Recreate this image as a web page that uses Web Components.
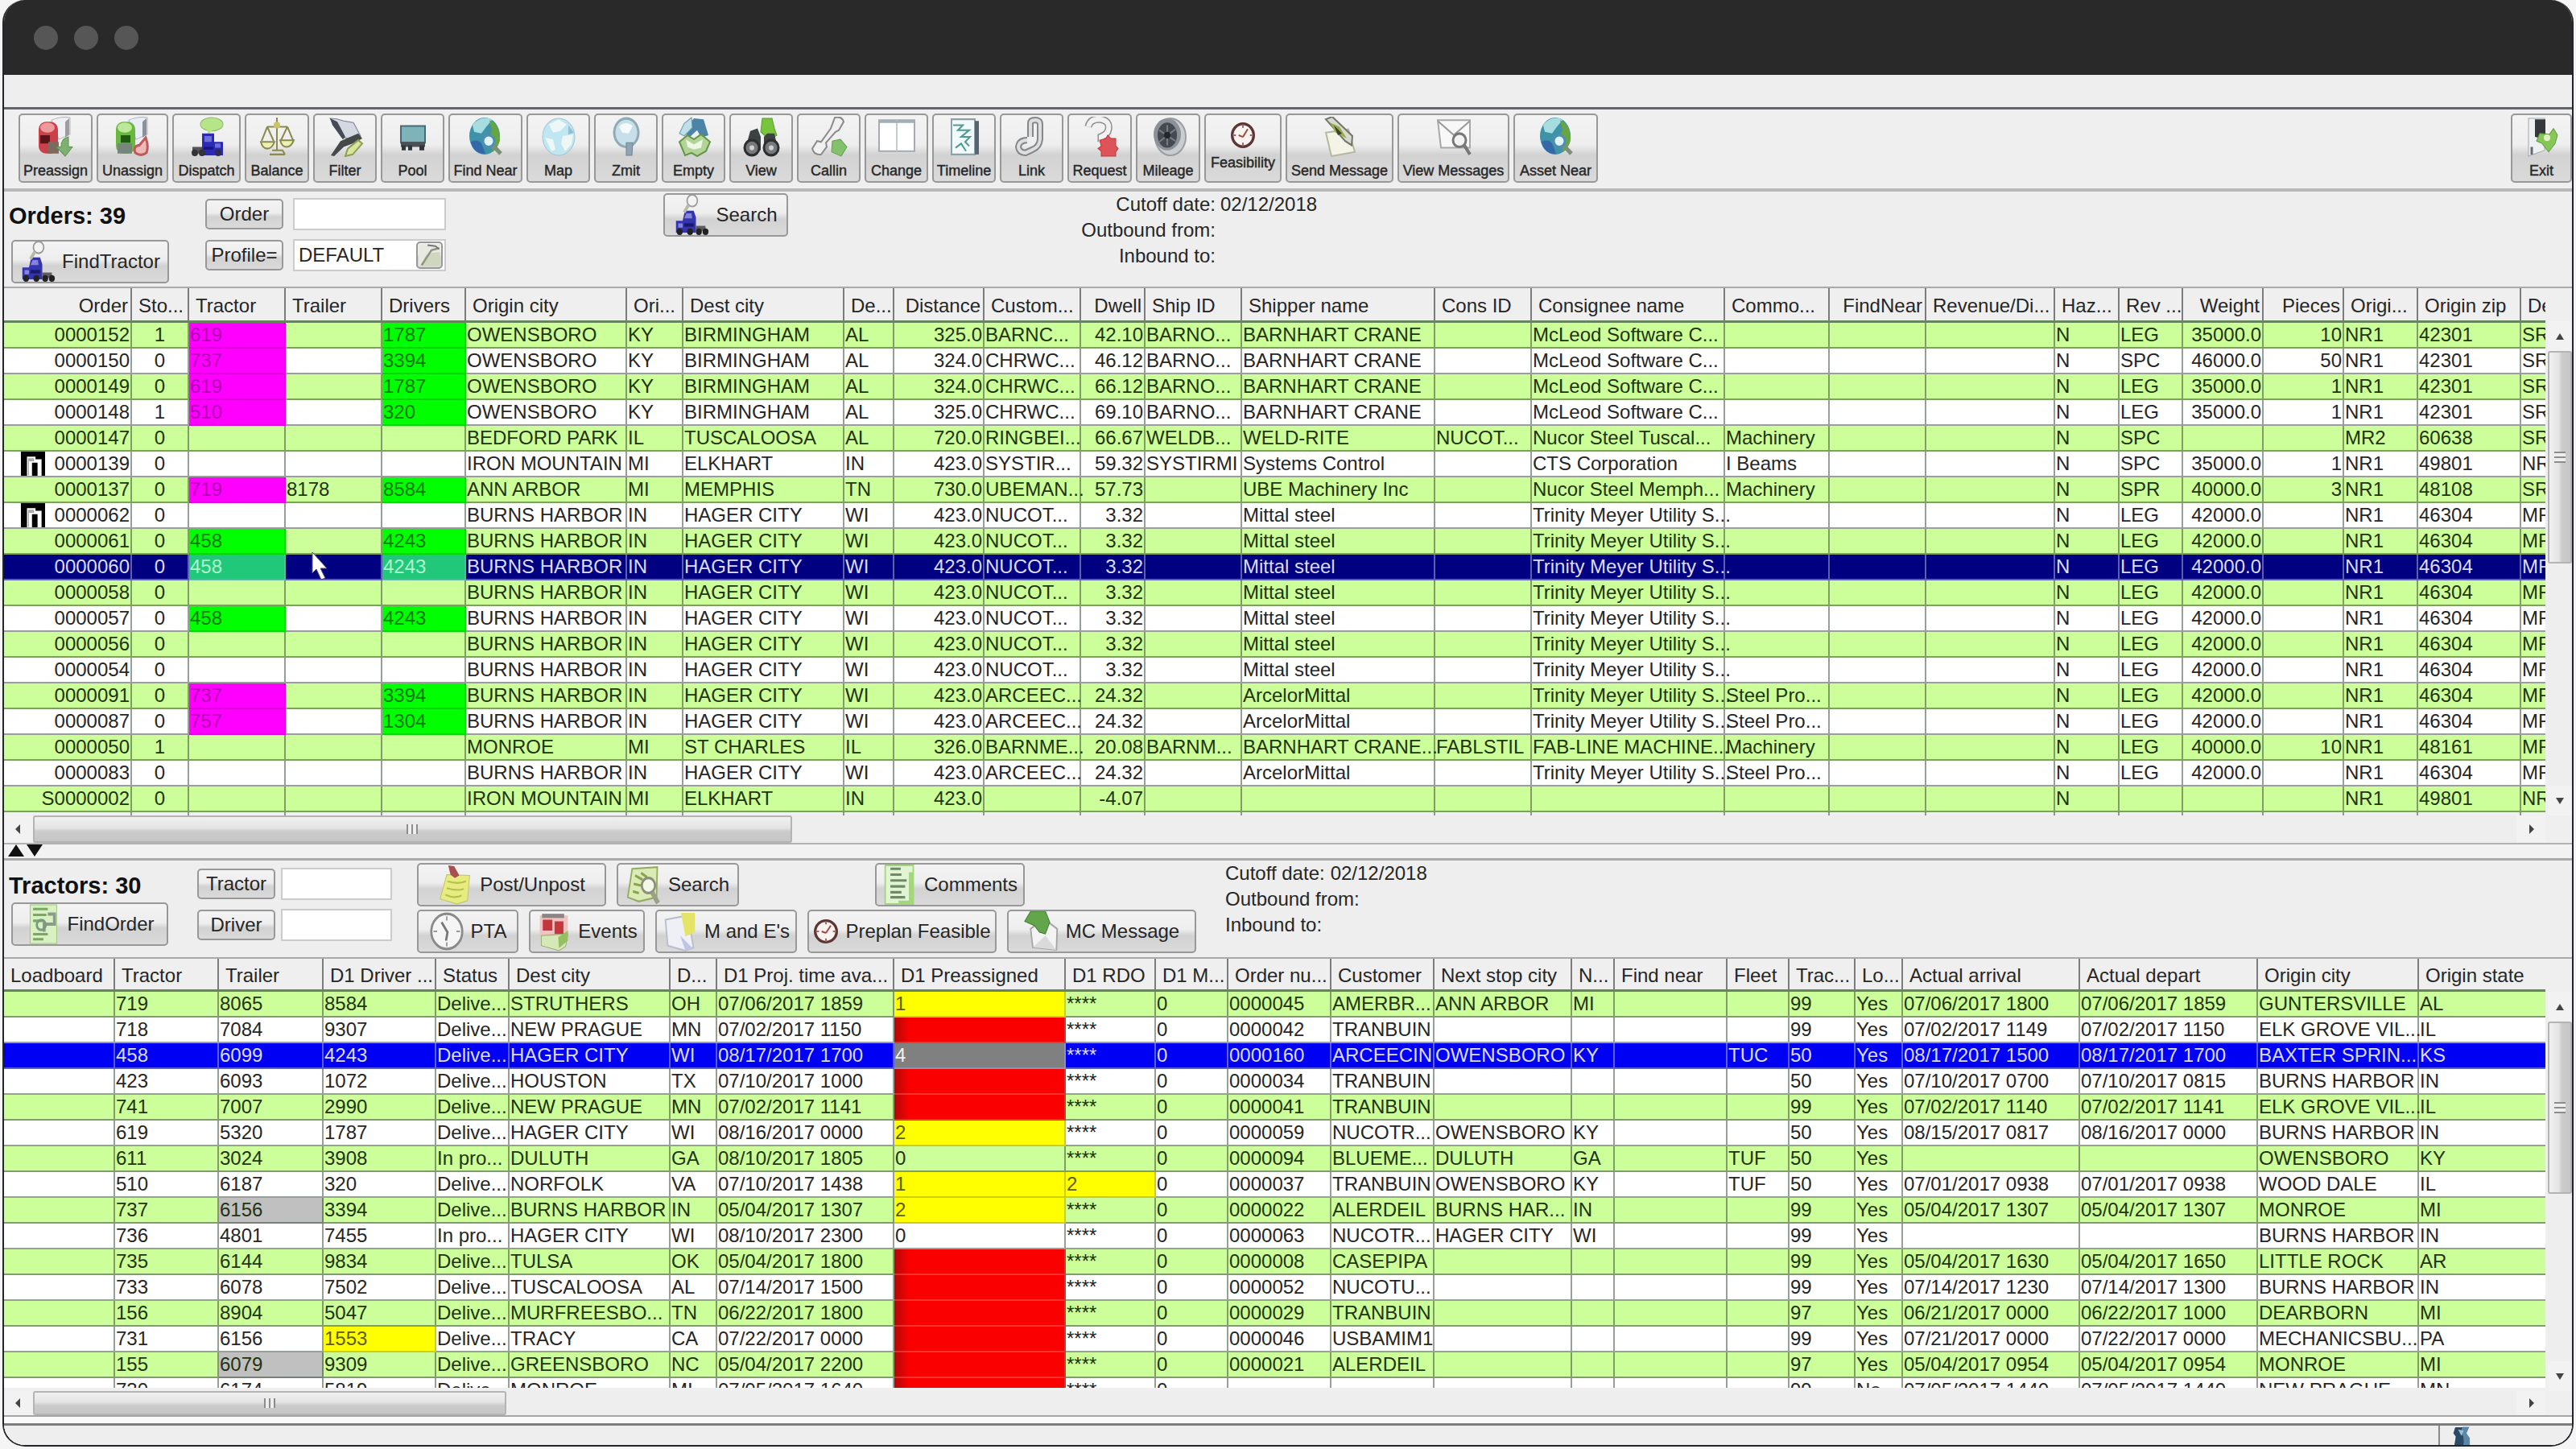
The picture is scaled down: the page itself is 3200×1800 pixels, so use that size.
<!DOCTYPE html>
<html lang="en">
<head>
<meta charset="utf-8">
<title>Dispatch planning</title>
<style>
    body {
        margin: 0;
        background: #f4f5f4;
        font-family: "Liberation Sans", Arial, sans-serif;
        font-size: 24px;
        color: #262626;
    }
</style>
</head>
<body>
<planning-window></planning-window>

<script>
/* ICONS: all drawn on a 48 x 48 box */
const truck = `
    <path d="M18 20h15v10h11v16H18z" fill="#2a2ab4"/>
    <path d="M21 23h9v7h-9zM34 32h7v5h-7z" fill="#6f6fd8"/>
    <path d="M20 36h12v3H20z" fill="#14147a"/>
    <path d="M6 36h12v8H6z" fill="#55555c"/>
    <circle cx="9" cy="43" r="4" fill="#333"/><circle cx="18" cy="43" r="4" fill="#333"/><circle cx="38" cy="43" r="4" fill="#2c2c50"/>`;
const truckLeft = `
    <path d="M15 19h12l3 8v18H3V31h9z" fill="#3434ac"/>
    <path d="M17 22h7l1 6H14zM6 34h6v5H6z" fill="#8484dc"/>
    <path d="M14 34h13v4H14z" fill="#18186e"/>
    <path d="M30 37h13v6H30z" fill="#5c5c62"/>
    <circle cx="8" cy="44" r="4" fill="#222"/><circle cx="22" cy="44" r="4" fill="#222"/><circle cx="34" cy="44" r="4" fill="#222"/><circle cx="43" cy="44" r="4" fill="#222"/>
    <ellipse cx="25" cy="7" rx="7" ry="7" fill="#f4f4f4" stroke="#9c9c9c" stroke-width="2"/>
    <path d="M20 12l-6 9" stroke="#b9b9a6" stroke-width="4"/>`;
const globe = `
    <ellipse cx="23" cy="23" rx="19" ry="22" fill="#3f93a8"/>
    <path d="M8 10c6-8 18-11 24-6l-7 8-6 8-9-2z" fill="#a7dde0"/>
    <path d="M29 4c9 3 14 13 13 24-2 8-7 13-9 14l-5-16 4-10z" fill="#67a544"/>
    <path d="M6 30c5-3 12-2 14 4l4 10C14 45 8 39 6 30z" fill="#3568a8"/>
    <circle cx="28" cy="29" r="7" fill="#e0f5fa" stroke="#4d8fb4" stroke-width="3"/>
    <path d="M34 35l9 9" stroke="#7b8f79" stroke-width="5"/>`;
const clock = `
    <circle cx="24" cy="24" r="20" fill="#fbf3f0" stroke="#5c3535" stroke-width="5"/>
    <path d="M24 5v6M24 37v6M5 24h6M37 24h6" stroke="#9c6a62" stroke-width="3"/>
    <path d="M24 27l9-14M24 27l-8-3" stroke="#a04a42" stroke-width="3"/>`;

const ICONS = {
    preassign: `
        <path d="M19 4q12-5 23-3v20l-14 6z" fill="#f0f0f4" stroke="#b5b5bb"/><path d="M41 2v19l-5 4V6z" fill="#9c9ca2"/>
        <rect x="3" y="6" width="24" height="38" rx="9" fill="#c9424a"/>
        <ellipse cx="14" cy="13" rx="9" ry="6" fill="#ee9a9c"/>
        <path d="M5 22h12v10H5z" fill="#5c141a"/><path d="M15 30h13v14H15z" fill="#7c6a5d"/>
        <path d="M40 24v12h5l-9 11-11-11h6q-1-9 9-12z" fill="#7fb072" stroke="#5f9455"/>`,
    unassign: `
        <path d="M19 4q12-5 23-3v20l-14 6z" fill="#e9edf6" stroke="#b0b5c2"/><path d="M41 2v19l-5 4V6z" fill="#8c9098"/>
        <rect x="3" y="6" width="24" height="38" rx="9" fill="#6ab83e"/>
        <ellipse cx="14" cy="13" rx="9" ry="6" fill="#bce89b"/>
        <path d="M9 22h12v9H9z" fill="#1e5a12"/><path d="M5 32h18v12H5z" fill="#76867a"/>
        <path d="M40 25q4 10 1 18-7 5-14 0-3-8 5-9z" fill="#f0b9b8" stroke="#bc5a5c" stroke-width="3"/>`,
    dispatch: `
        <ellipse cx="30" cy="9" rx="14" ry="8" fill="#b5e588" stroke="#8cb76c"/>
        <path d="M24 15l2 6 5-5z" fill="#b5e588"/>` + truck,
    balance: `
        <g fill="none" stroke="#8a8a4c" stroke-width="2">
        <path d="M24 1v38M12 12h25M12 12l-7 17M12 12l8 17M37 12l-8 16M37 12l7 16M15 45h19M18 40h13l3 5"/>
        <path d="M4 30h17q-3 8-9 8t-8-8zM28 28h17q-3 8-9 8t-8-8z" fill="#edf0b4"/></g>
        <circle cx="24" cy="10" r="4" fill="#c9c36c"/>`,
    filter: `
        <path d="M5 2q8 0 17 3l12 2 9 16-7 5L19 24 9 8z" fill="#d3d8e2" stroke="#7a808e"/>
        <path d="M5 2l9 4 10 18-3 3L8 10z" fill="#444a56"/>
        <path d="M40 20l5 6-9 5-14 5-12 11-4-1 12-17z" fill="#46484a"/>
        <path d="M40 28l5 4-12 13-9 2 3-9z" fill="#d8e59a" stroke="#8ca055" stroke-width="2"/>`,
    pool: `
        <path d="M9 11h30v20H9z" fill="#7fb3ba" stroke="#496a72" stroke-width="2"/>
        <path d="M9 30h30v6H9z" fill="#4a5055"/>
        <path d="M10 34h5v6h-5zM18 34h5v6h-5zM32 34h6v6h-6z" fill="#30363a"/>`,
    globe: globe,
    map: `
        <ellipse cx="24" cy="24" rx="20" ry="22" fill="#c0e6f1" stroke="#a9c6d2"/>
        <path d="M12 9l12-6 10 6-8 8-9 2zM7 25l10 2 3 12-5 2zM29 23l13-2-2 12-8 8-5-9z" fill="#edf7f6"/>
        <path d="M36 10l7 9-7 2z" fill="#93bfd3"/>`,
    zmit: `
        <ellipse cx="24" cy="19" rx="15" ry="17" fill="#c7dfe9" stroke="#90aab6" stroke-width="3"/>
        <path d="M15 12q8-8 17-1l-5 9-8-1z" fill="#f4fafb"/>
        <path d="M24 31h8l-1 15h-7z" fill="#8fa4b4" stroke="#6f8494"/>`,
    empty: `
        <path d="M24 2l12 1 6 19-9 3-5-9-9 8-9-5z" fill="#4b84a6"/>
        <path d="M12 8l9-7 1 12-10 10-6-3z" fill="#bfe0ea" stroke="#6b98aa"/>
        <path d="M6 30l10-8 8 5 9-6 11 9-5 11-11 6-7-4-8 3z" fill="#b2d596" stroke="#67934d" stroke-width="2"/>
        <path d="M14 27l10 6 11-6-2 10-9 2-8-3z" fill="#eef6e8"/>`,
    view: `
        <path d="M25 2h12l3 12 3 8-10 5-10-9z" fill="#78c53c" stroke="#5a9a2f"/>
        <path d="M10 17l9-3 4 10v16l-19-2zM27 24l4-4h9l4 18-17 2z" fill="#3c4142"/>
        <circle cx="12" cy="37" r="9" fill="#77797b" stroke="#2c2e2f" stroke-width="3"/><circle cx="36" cy="37" r="9" fill="#77797b" stroke="#2c2e2f" stroke-width="3"/>
        <circle cx="12" cy="37" r="3" fill="#cfd0d0"/><circle cx="36" cy="37" r="3" fill="#cfd0d0"/>`,
    callin: `
        <path d="M31 1q9-2 11 5l-6 10-4 2-12 13 1 5-7 9q-9 1-11-7l6-9 5 1 12-16z" fill="#f0f0f0" stroke="#8b8b8b" stroke-width="2"/>
        <path d="M28 29l10-2 8 9-7 11-12-5z" fill="#83c26a" stroke="#62a04e"/>`,
    change: `
        <path d="M2 4h44v37H2z" fill="#fff" stroke="#a7abaf" stroke-width="2"/>
        <path d="M24 4v37" stroke="#c3ccd2" stroke-width="2"/><path d="M3 6h42" stroke="#9fb0bb" stroke-width="3"/>`,
    timeline: `
        <path d="M8 3h29v42H8z" fill="#f2f9fa" stroke="#8ca1a6" stroke-width="2"/><path d="M37 5v40h5V5z" fill="#58646e"/>
        <path d="M10 10h12l-6 6h14l-10 8h11l-6 6 5 5M13 37l7-5 6 9" fill="none" stroke="#4e9a96" stroke-width="2"/>`,
    link: `
        <g fill="none" stroke="#85888b" stroke-width="8"><path d="M22 24V8q0-4 6-4t6 5v18q-1 9-9 12l-9 4q-8 0-9-7 1-8 11-8"/></g>
        <g fill="none" stroke="#dedede" stroke-width="4"><path d="M22 24V8q0-4 6-4t6 5v18q-1 9-9 12l-9 4q-8 0-9-7 1-8 11-8"/></g>`,
    request: `
        <path d="M10 12q2-10 15-9 12 2 10 12-1 6-9 9v6" fill="none" stroke="#8e8e8e" stroke-width="9"/>
        <path d="M10 12q2-10 15-9 12 2 10 12-1 6-9 9v6" fill="none" stroke="#f1f1f1" stroke-width="6"/>
        <path d="M24 28l8-2 2-4 4 4h6v9l3 3-3 4v5H26v-6l-4-3 4-3z" fill="#dd5358" stroke="#c03a42"/>`,
    mileage: `
        <ellipse cx="27" cy="24" rx="19" ry="22" fill="#c9cdd2" stroke="#9b9fa4" stroke-width="2"/>
        <ellipse cx="23" cy="21" rx="17" ry="19" fill="#8c9198"/>
        <ellipse cx="23" cy="22" rx="12" ry="15" fill="#454a51"/>
        <path d="M23 10v24M13 16l20 13M33 15L13 30" stroke="#777c84" stroke-width="2"/>
        <circle cx="23" cy="22" r="4" fill="#23262b"/>`,
    clock: clock,
    send: `
        <path d="M7 19l28-4 8 27-29 5z" fill="#f3f4e6" stroke="#b5b8a2" stroke-width="2"/>
        <path d="M7 3l8-3 25 23-1 11-8-5z" fill="#d8dad0" stroke="#73766b" stroke-width="2"/>
        <path d="M12 7l12 5 9 14-14-7z" fill="#95ad4c"/><path d="M17 10l5 12 5-2z" fill="#3d3f35"/>`,
    envelope: `
        <path d="M4 4h40v33H8z" fill="#f8f8f8" stroke="#a8a8a8" stroke-width="2"/>
        <path d="M4 5l20 17L44 5" fill="none" stroke="#9a9a9a" stroke-width="2"/>
        <circle cx="31" cy="28" r="8" fill="#f1f3f3" stroke="#777" stroke-width="3"/><path d="M37 34l7 11" stroke="#777" stroke-width="4"/>`,
    exit: `
        <path d="M8 2h20v38l-20 7z" fill="#eef0f2" stroke="#a3a7aa"/><path d="M16 3h13v24l-13-3z" fill="#35383c"/>
        <path d="M22 20l12 1 5-7 5 8-3 10-8 10-8-10-7-3z" fill="#86c757" stroke="#629c3e"/><circle cx="31" cy="25" r="4" fill="#dff2c0"/>
        <path d="M12 36v9" stroke="#666a70" stroke-width="3"/>`,
    truckLeft: truckLeft,
    sheet: `
        <path d="M7 1h36v46H7z" fill="#d9f0c2" stroke="#9cc57c"/>
        <path d="M11 6h20M11 13h18M11 20h15M11 36h20M11 42h14" stroke="#7aa864" stroke-width="3"/>
        <path d="M31 12h9v12H26v9" fill="none" stroke="#8a9a8b" stroke-width="4"/><circle cx="22" cy="25" r="6" fill="none" stroke="#7a9884" stroke-width="3"/>`,
    comments: `
        <path d="M4 1h38v46H4z" fill="#e2f5d2" stroke="#a4d47d" stroke-width="2"/><path d="M36 9h6v38H22v-4h14z" fill="#a2d77b"/>
        <path d="M11 5h14M11 12h15M11 19h22M11 26h20M11 33h15M11 39h20" stroke="#6f8a68" stroke-width="3"/>`,
    post: `
        <path d="M12 12l31 1-3 30-14 4-23-6z" fill="#e6ec7f" stroke="#bfc265"/>
        <path d="M13 20q14 4 25 0M12 28q14 4 23 1M10 36q12 5 22 1" fill="none" stroke="#b6bf52" stroke-width="2"/>
        <path d="M14 1l8 1 7 11-6 3-6-4z" fill="#a65150"/>`,
    mapSearch: `
        <path d="M8 5l34-2-1 36-24 5-15-5z" fill="#dcebb6" stroke="#93ac63" stroke-width="2"/>
        <path d="M12 13l10 5M20 10l8 5M10 23l10 2M9 32l8 2" stroke="#86a64e" stroke-width="3"/>
        <circle cx="30" cy="25" r="9" fill="#f3f7e8" stroke="#8c8f7c" stroke-width="3"/><path d="M35 33l8 13" stroke="#9ca086" stroke-width="6"/>`,
    dial: `
        <circle cx="24" cy="24" r="21" fill="#f5f5f5" stroke="#8a8a8a" stroke-width="3"/>
        <path d="M24 6v5M24 37v5M6 24h5M37 24h5" stroke="#999" stroke-width="2"/><path d="M17 13l8 12-2 10" fill="none" stroke="#777" stroke-width="3"/>`,
    events: `
        <path d="M5 5h38v25H5z" fill="#efc3c0"/><path d="M8 3h30v5H8z" fill="#8d8585"/>
        <path d="M9 10h13v13H9zM25 12h12v15H25z" fill="#c4373e"/>
        <path d="M7 29l36-2-3 15-9 5-24-6z" fill="#d6e8b7" stroke="#99a86f"/><path d="M30 31l13-8v12l-12 9z" fill="#94c061"/>`,
    note: `
        <path d="M4 10l30-5 8 38-11 4-24-6z" fill="#eef0f6" stroke="#b9bccb" stroke-width="2"/>
        <path d="M25 2h19v23l-13 5z" fill="#e5e468"/><path d="M24 29l18 16-11 2z" fill="#bdc5e3"/>`,
    mail: `
        <path d="M9 21l18-12 18 12-1 25-32-3z" fill="#f3f3f3" stroke="#a5a5a5" stroke-width="2"/>
        <path d="M12 43l17-14 15 17z" fill="#dadada"/>
        <path d="M9 0h20l6 13-6 14-8-2-7-8-13-5z" fill="#62a54a" stroke="#3f7b31"/>`,
    lookup: `
        <path d="M2 2h44v44H2z" fill="#e9e9e4"/><path d="M18 22q10-4 28-4v28H4z" fill="#cfd8bf"/>
        <path d="M44 10L28 14 8 44" fill="none" stroke="#8f9483" stroke-width="4"/><path d="M20 4l16 2 8 6" fill="none" stroke="#777" stroke-width="3"/>`,
    doc: `
        <path d="M0 0h48v48H0z" fill="#000"/><path d="M12 10h17v5h12v33h-8V22H22v26H12z" fill="#fff"/><path d="M14 13h12v6H16v28h-2z" fill="#aaa"/>`,
    user: `
        <path d="M12 4h16l-4 12 8 10-2 22H10l3-22-5-8z" fill="#2b4a66"/><path d="M28 3h14l-6 15 7 12v18H31l-2-22-5-8z" fill="#5c88a8"/><path d="M18 9l12 3-5 12z" fill="#9cc0d5"/>`
};

const svg = name => `<svg viewBox="0 0 48 48" preserveAspectRatio="none" aria-hidden="true">${ICONS[name]}</svg>`;

const buttonLook = `
    button {
        box-sizing: border-box;
        width: 100%;
        height: 100%;
        margin: 0;
        padding: 0;
        border: 2px solid #989898;
        border-radius: 5px;
        background: linear-gradient(#f3f3f3, #eeeeee 45%, #d2d2d2 60%, #dadada);
        font: inherit;
        color: inherit;
        white-space: nowrap;
    }`;

/* TOOLBAR BUTTON: picture above a small label */
class ToolButton extends HTMLElement {
    constructor() {
        super();
        this.shadowDOM = this.attachShadow({mode: "open"});
    }

    connectedCallback() {
        this.shadowDOM.innerHTML = `
        <style>
        :host { display: block; height: 86px; font-size: 18px; }
        ${buttonLook}
        button {
            display: flex;
            flex-direction: column;
            align-items: center;
            justify-content: flex-start;
            gap: 5px;
            line-height: 24px;
            -webkit-text-stroke: 0.4px;
        }
        svg { width: 48px; height: 50px; margin-top: 2px; }
        :host([small]) svg { width: 32px; height: 34px; margin-top: 8px; }
        </style>
        <button type="button">${svg(this.getAttribute("icon"))}<span><slot></slot></span></button>`;
    }
}
customElements.define("tool-button", ToolButton);

/* PANEL BUTTON: optional picture left of the label */
class PanelButton extends HTMLElement {
    constructor() {
        super();
        this.shadowDOM = this.attachShadow({mode: "open"});
    }

    connectedCallback() {
        const icon = this.getAttribute("icon");
        this.shadowDOM.innerHTML = `
        <style>
        :host { display: block; height: 54px; }
        ${buttonLook}
        button { display: flex; align-items: center; justify-content: center; gap: 8px; }
        svg { width: 44px; height: 50px; }
        :host([icon="clock"]) svg { width: 32px; height: 32px; }
        :host([plain]) { height: 38px; }
        </style>
        <button type="button">${icon ? svg(icon) : ""}<span><slot></slot></span></button>`;
    }
}
customElements.define("panel-button", PanelButton);

/* TEXT FIELD, with a lookup button when asked for */
class TextField extends HTMLElement {
    constructor() {
        super();
        this.shadowDOM = this.attachShadow({mode: "open"});
    }

    connectedCallback() {
        this.shadowDOM.innerHTML = `
        <style>
        :host { box-sizing: border-box; display: flex; align-items: center; height: 40px; border: 2px solid #cbcbcb; background: #fff; }
        input { flex: 1; min-width: 0; padding: 0 0 0 5px; border: 0; background: none; font: inherit; color: inherit; outline: 0; }
        ${buttonLook}
        button { width: 33px; height: 34px; margin-right: 2px; }
        svg { display: block; width: 100%; height: 100%; }
        </style>
        <input type="text" aria-label="${this.getAttribute("label")}" value="${this.getAttribute("value") || ""}">
        ${this.hasAttribute("lookup") ? `<button type="button" aria-label="Lookup">${svg("lookup")}</button>` : ""}`;
    }
}
customElements.define("text-field", TextField);

/* SCROLL BAR: thumb and rest share the track by their weights */
class ScrollTrack extends HTMLElement {
    constructor() {
        super();
        this.shadowDOM = this.attachShadow({mode: "open"});
    }

    connectedCallback() {
        const vertical = this.hasAttribute("vertical");
        const arrow = d => `<svg viewBox="0 0 16 16"><path d="${d}" fill="#444"/></svg>`;
        this.shadowDOM.innerHTML = `
        <style>
        :host { display: flex; flex-direction: ${vertical ? "column" : "row"}; background: #eeeeee; }
        button { flex: none; display: flex; align-items: center; justify-content: center; width: 36px; padding: 0; border: 0; background: #f2f2f2; }
        button svg { width: 16px; height: 16px; }
        .thumb {
            box-sizing: border-box;
            flex: ${this.getAttribute("thumb")} 0 0;
            display: flex;
            align-items: center;
            justify-content: center;
            border: 2px solid #b4b4b4;
            border-radius: 3px;
            background: linear-gradient(${vertical ? "to right" : "to bottom"}, #f0f0f0, #e4e4e4 45%, #cbcbcb 60%, #c6c6c6);
        }
        .grip { width: 14px; height: 12px; background: repeating-linear-gradient(to right, #8c8c8c 0 2px, #eee 2px 6px); }
        .rest { flex: ${this.getAttribute("rest")} 0 0; }
        :host([vertical]) button { width: 100%; height: 37px; }
        :host([vertical]) .grip { width: 14px; height: 14px; background: repeating-linear-gradient(#8c8c8c 0 2px, #eee 2px 6px); }
        </style>
        <button type="button" aria-label="Scroll back">${arrow(vertical ? "M8 4l5 8H3z" : "M4 8l6-6v12z")}</button>
        <div class="thumb"><div class="grip"></div></div>
        <div class="rest"></div>
        <button type="button" aria-label="Scroll on">${arrow(vertical ? "M8 12L3 4h10z" : "M12 8L6 2v12z")}</button>`;
    }
}
customElements.define("scroll-track", ScrollTrack);

/* DATA
   columns: title, width, alignment
   cells: an optional "class~" in front of the text */
const ORDER_COLUMNS = [
    ["Order", 159, "r"], ["Sto...", 71, "c"], ["Tractor", 120], ["Trailer", 120], ["Drivers", 104],
    ["Origin city", 200], ["Ori...", 70], ["Dest city", 200], ["De...", 62], ["Distance", 112, "r"],
    ["Custom...", 120], ["Dwell", 80, "r"], ["Ship ID", 120], ["Shipper name", 240], ["Cons ID", 120],
    ["Consignee name", 240], ["Commo...", 130], ["FindNear", 120, "r"], ["Revenue/Di...", 160], ["Haz...", 80],
    ["Rev ...", 79], ["Weight", 100, "r"], ["Pieces", 100, "r"], ["Origi...", 92], ["Origin zip", 128], ["De", 31]
];

const burns = "BURNS HARBOR|IN|HAGER CITY|WI|423.0";
const mittal = burns + "|NUCOT...|3.32||Mittal steel||Trinity Meyer Utility S...||||N|LEG|42000.0||NR1|46304|MR";
const arcelor = burns + "|ARCEEC...|24.32||ArcelorMittal||Trinity Meyer Utility S...|Steel Pro...|||N|LEG|42000.0||NR1|46304|MR";
const ORDER_ROWS = [
    "0000152|1|pink~619||lime~1787|OWENSBORO|KY|BIRMINGHAM|AL|325.0|BARNC...|42.10|BARNO...|BARNHART CRANE||McLeod Software C...||||N|LEG|35000.0|10|NR1|42301|SR",
    "0000150|0|pink~737||lime~3394|OWENSBORO|KY|BIRMINGHAM|AL|324.0|CHRWC...|46.12|BARNO...|BARNHART CRANE||McLeod Software C...||||N|SPC|46000.0|50|NR1|42301|SR",
    "0000149|0|pink~619||lime~1787|OWENSBORO|KY|BIRMINGHAM|AL|324.0|CHRWC...|66.12|BARNO...|BARNHART CRANE||McLeod Software C...||||N|LEG|35000.0|1|NR1|42301|SR",
    "0000148|1|pink~510||lime~320|OWENSBORO|KY|BIRMINGHAM|AL|325.0|CHRWC...|69.10|BARNO...|BARNHART CRANE||McLeod Software C...||||N|LEG|35000.0|1|NR1|42301|SR",
    "0000147|0||||BEDFORD PARK|IL|TUSCALOOSA|AL|720.0|RINGBEI...|66.67|WELDB...|WELD-RITE|NUCOT...|Nucor Steel Tuscal...|Machinery|||N|SPC|||MR2|60638|SR",
    "doc~0000139|0||||IRON MOUNTAIN|MI|ELKHART|IN|423.0|SYSTIR...|59.32|SYSTIRMI|Systems Control||CTS Corporation|I Beams|||N|SPC|35000.0|1|NR1|49801|NR",
    "0000137|0|pink~719|8178|lime~8584|ANN ARBOR|MI|MEMPHIS|TN|730.0|UBEMAN...|57.73||UBE Machinery Inc||Nucor Steel Memph...|Machinery|||N|SPR|40000.0|3|NR1|48108|SR",
    "doc~0000062|0||||" + mittal,
    "0000061|0|lime~458||lime~4243|" + mittal,
    "*0000060|0|mint~458|pointer~|mint~4243|" + mittal,
    "0000058|0||||" + mittal,
    "0000057|0|lime~458||lime~4243|" + mittal,
    "0000056|0||||" + mittal,
    "0000054|0||||" + mittal,
    "0000091|0|pink~737||lime~3394|" + arcelor,
    "0000087|0|pink~757||lime~1304|" + arcelor,
    "0000050|1||||MONROE|MI|ST CHARLES|IL|326.0|BARNME...|20.08|BARNM...|BARNHART CRANE...|FABLSTIL|FAB-LINE MACHINE...|Machinery|||N|LEG|40000.0|10|NR1|48161|MR",
    "0000083|0||||" + arcelor,
    "S0000002|0||||IRON MOUNTAIN|MI|ELKHART|IN|423.0||-4.07||||||||N||||NR1|49801|NR"
];

const TRACTOR_COLUMNS = [
    ["Loadboard", 138], ["Tractor", 129], ["Trailer", 130], ["D1 Driver ...", 140], ["Status", 91],
    ["Dest city", 200], ["D...", 58], ["D1 Proj. time ava...", 220], ["D1 Preassigned", 213], ["D1 RDO", 112],
    ["D1 M...", 90], ["Order nu...", 128], ["Customer", 128], ["Next stop city", 171], ["N...", 53],
    ["Find near", 140], ["Fleet", 77], ["Trac...", 82], ["Lo...", 59], ["Actual arrival", 220],
    ["Actual depart", 221], ["Origin city", 200], ["Origin state", 158]
];

const TRACTOR_ROWS = [
    "|719|8065|8584|Delive...|STRUTHERS|OH|07/06/2017 1859|gold~1|****|0|0000045|AMERBR...|ANN ARBOR|MI|||99|Yes|07/06/2017 1800|07/06/2017 1859|GUNTERSVILLE|AL",
    "|718|7084|9307|Delive...|NEW PRAGUE|MN|07/02/2017 1150|red~|****|0|0000042|TRANBUIN|||||99|Yes|07/02/2017 1149|07/02/2017 1150|ELK GROVE VIL...|IL",
    "*|458|6099|4243|Delive...|HAGER CITY|WI|08/17/2017 1700|slate~4|****|0|0000160|ARCEECIN|OWENSBORO|KY||TUC|50|Yes|08/17/2017 1500|08/17/2017 1700|BAXTER SPRIN...|KS",
    "|423|6093|1072|Delive...|HOUSTON|TX|07/10/2017 1000|red~|****|0|0000034|TRANBUIN|||||50|Yes|07/10/2017 0700|07/10/2017 0815|BURNS HARBOR|IN",
    "|741|7007|2990|Delive...|NEW PRAGUE|MN|07/02/2017 1141|red~|****|0|0000041|TRANBUIN|||||99|Yes|07/02/2017 1140|07/02/2017 1141|ELK GROVE VIL...|IL",
    "|619|5320|1787|Delive...|HAGER CITY|WI|08/16/2017 0000|gold~2|****|0|0000059|NUCOTR...|OWENSBORO|KY|||50|Yes|08/15/2017 0817|08/16/2017 0000|BURNS HARBOR|IN",
    "|611|3024|3908|In pro...|DULUTH|GA|08/10/2017 1805|0|****|0|0000094|BLUEME...|DULUTH|GA||TUF|50|Yes|||OWENSBORO|KY",
    "|510|6187|320|Delive...|NORFOLK|VA|07/10/2017 1438|gold~1|gold~2|0|0000037|TRANBUIN|OWENSBORO|KY||TUF|50|Yes|07/01/2017 0938|07/01/2017 0938|WOOD DALE|IL",
    "|737|gray~6156|3394|Delive...|BURNS HARBOR|IN|05/04/2017 1307|gold~2|****|0|0000022|ALERDEIL|BURNS HAR...|IN|||99|Yes|05/04/2017 1307|05/04/2017 1307|MONROE|MI",
    "|736|4801|7455|In pro...|HAGER CITY|WI|08/10/2017 2300|0|****|0|0000063|NUCOTR...|HAGER CITY|WI|||99|Yes|||BURNS HARBOR|IN",
    "|735|6144|9834|Delive...|TULSA|OK|05/04/2017 1800|red~|****|0|0000008|CASEPIPA|||||99|Yes|05/04/2017 1630|05/04/2017 1650|LITTLE ROCK|AR",
    "|733|6078|7502|Delive...|TUSCALOOSA|AL|07/14/2017 1500|red~|****|0|0000052|NUCOTU...|||||99|Yes|07/14/2017 1230|07/14/2017 1300|BURNS HARBOR|IN",
    "|156|8904|5047|Delive...|MURFREESBO...|TN|06/22/2017 1800|red~|****|0|0000029|TRANBUIN|||||97|Yes|06/21/2017 0000|06/22/2017 1000|DEARBORN|MI",
    "|731|6156|gold~1553|Delive...|TRACY|CA|07/22/2017 0000|red~|****|0|0000046|USBAMIM1|||||99|Yes|07/21/2017 0000|07/22/2017 0000|MECHANICSBU...|PA",
    "|155|gray~6079|9309|Delive...|GREENSBORO|NC|05/04/2017 2200|red~|****|0|0000021|ALERDEIL|||||97|Yes|05/04/2017 0954|05/04/2017 0954|MONROE|MI",
    "|730|6174|5819|Delive...|MONROE|MI|07/05/2017 1640|red~|****|0|||||||99|No|07/05/2017 1440|07/05/2017 1440|NEW PRAGUE|MN"
];

const SOURCES = {
    orders: {columns: ORDER_COLUMNS, rows: ORDER_ROWS, tail: true},
    tractors: {columns: TRACTOR_COLUMNS, rows: TRACTOR_ROWS}
};

/* DATA GRID */
class DataGrid extends HTMLElement {
    constructor() {
        super();
        this.shadowDOM = this.attachShadow({mode: "open"});
    }

    connectedCallback() {
        this.render(SOURCES[this.getAttribute("source")]);
    }

    cell(raw, align) {
        const [kind, text] = raw.includes("~") ? raw.split("~") : ["", raw];
        let extra = "";
        if (kind === "doc") extra = svg("doc");
        if (kind === "pointer") extra = `<svg class="arrow" viewBox="0 0 20 36" aria-hidden="true"><path d="M1 1v26l5-5 6 13 5-2-6-12h8z" fill="#fff" stroke="#55556a" stroke-width="1"/></svg>`;
        return `<td class="${kind} ${align || ""}">${extra}${text}</td>`;
    }

    // a leading star marks the selected row
    row(line, columns) {
        const selected = line.startsWith("*");
        const values = (selected ? line.slice(1) : line).split("|");
        return `<tr${selected ? ' class="selected"' : ""}>${columns.map((c, i) => this.cell(values[i] || "", c[2])).join("")}</tr>`;
    }

    render({columns, rows, tail}) {
        this.shadowDOM.innerHTML = `
        <style>
        :host { display: block; overflow: hidden; --line: rgba(50, 62, 50, 0.5); --mark: #000080; --head: 43px; }
        :host([source="tractors"]) { --mark: #0000f4; --head: 41px; }
        table { width: 100%; table-layout: fixed; border-collapse: separate; border-spacing: 0; white-space: nowrap; }
        th, td { box-sizing: border-box; padding: 0 1px; text-align: left; border-right: 2px solid var(--line); }
        th { height: var(--head); padding: 4px 3px 0 8px; font-weight: normal; background: #efefef; border-bottom: 3px solid #66855a; line-height: 34px; border-right-color: #7c7c7c; }
        td { height: 32px; line-height: 30px; border-bottom: 2px solid var(--line); }
        th:last-child, td:last-child { border-right: 0; overflow: hidden; }
        .r { text-align: right; }
        .c { text-align: center; }
        td:first-child, th:first-child { padding-left: 8px; }
        tr { background: #fff; }
        tbody tr:nth-child(odd) { background: #ccff99; color: #23330f; }
        tbody tr.selected { background: var(--mark); color: #dcdcff; --line: rgba(150, 160, 200, 0.6); }
        tr.tail td { height: 4px; border-bottom: 0; background: #f0f0f0; }
        .pink { background: #ff00ff; color: #b400b4; --line: rgba(120, 0, 120, 0.25); }
        .lime { background: #00ff00; color: #0c7a0c; --line: rgba(0, 110, 0, 0.3); }
        .mint { background: #22c87a; color: #aef5d0; }
        .gold { background: #ffff00; color: #5c5c00; --line: rgba(120, 120, 0, 0.35); }
        .red { background: linear-gradient(to right, #b40808, #e00404 12px, #fb0000 18px); --line: rgba(255, 120, 110, 0.4); }
        .slate { background: #808080; color: #f0f0f0; }
        .gray { background: #c0c0c0; }
        .doc svg { width: 30px; height: 30px; margin-right: 12px; vertical-align: top; }
        .pointer { position: relative; }
        .arrow { position: absolute; left: 32px; top: -4px; width: 20px; height: 36px; z-index: 1; }
        </style>
        <table>
            <colgroup>${columns.map(c => `<col style="width: ${c[1]}px">`).join("")}</colgroup>
            <thead><tr>${columns.map(c => `<th scope="col" class="${c[2] === "r" ? "r" : ""}">${c[0]}</th>`).join("")}</tr></thead>
            <tbody>
            ${rows.map(r => this.row(r, columns)).join("")}
            ${tail ? `<tr class="tail">${columns.map(() => "<td></td>").join("")}</tr>` : ""}
            </tbody>
        </table>`;
    }
}
customElements.define("data-grid", DataGrid);

/* GRID WITH ITS SCROLL BARS */
class ScrollFrame extends HTMLElement {
    constructor() {
        super();
        this.shadowDOM = this.attachShadow({mode: "open"});
    }

    connectedCallback() {
        const [vt, vr, ht, hr] = this.getAttribute("tracks").split(" ");
        this.shadowDOM.innerHTML = `
        <style>
        :host { display: grid; grid-template-columns: minmax(0, 1fr) 33px; grid-template-rows: minmax(0, 1fr) auto; border-top: 2px solid #a9a9a9; background: #efefef; min-height: 0; }
        .down { margin: 41px 0 0 3px; }
        .across { height: var(--bar, 34px); }
        ::slotted(*) { min-height: 0; }
        </style>
        <slot></slot>
        <scroll-track class="down" vertical thumb="${vt}" rest="${vr}"></scroll-track>
        <scroll-track class="across" thumb="${ht}" rest="${hr}"></scroll-track>`;
    }
}
customElements.define("scroll-frame", ScrollFrame);

/* CUTOFF, OUTBOUND AND INBOUND LINES */
class PlanInfo extends HTMLElement {
    constructor() {
        super();
        this.shadowDOM = this.attachShadow({mode: "open"});
    }

    connectedCallback() {
        this.shadowDOM.innerHTML = `
        <style>
        :host { display: block; line-height: 32px; white-space: nowrap; }
        dl { display: grid; grid-template-columns: 167px auto; column-gap: 6px; margin: 0; }
        dt { text-align: right; }
        dd { margin: 0; }
        :host([start]) dl { display: block; }
        :host([start]) dl div { display: flex; gap: 7px; }
        dl div { display: contents; }
        </style>
        <dl>
            <div><dt>Cutoff date:</dt><dd>02/12/2018</dd></div>
            <div><dt>Outbound from:</dt><dd></dd></div>
            <div><dt>Inbound to:</dt><dd></dd></div>
        </dl>`;
    }
}
customElements.define("plan-info", PlanInfo);

/* PANEL ABOVE EACH GRID */
const panelLook = `
    :host { display: grid; box-sizing: border-box; padding: 0 6px; background: #eeeeee; }
    h2 { margin: 0; font-size: 29px; color: #111; }
    .form { display: grid; align-content: start; align-items: center; row-gap: 11px; }`;

class OrdersPanel extends HTMLElement {
    constructor() {
        super();
        this.shadowDOM = this.attachShadow({mode: "open"});
    }

    connectedCallback() {
        this.shadowDOM.innerHTML = `
        <style>
        ${panelLook}
        :host { height: 118px; grid-template-columns: 244px 569px 519px 1fr; }
        h2 { line-height: 60px; }
        .find { width: 196px; margin-left: 3px; }
        .form { grid-template-columns: 97px 190px; column-gap: 12px; padding-top: 8px; }
        .search { width: 155px; margin-top: 2px; }
        </style>
        <div><h2>Orders: 39</h2><panel-button class="find" icon="truckLeft">FindTractor</panel-button></div>
        <div class="form">
            <panel-button plain>Order</panel-button><text-field label="Order"></text-field>
            <panel-button plain>Profile=</panel-button><text-field label="Profile=" value="DEFAULT" lookup></text-field>
        </div>
        <panel-button class="search" icon="truckLeft">Search</panel-button>
        <plan-info></plan-info>`;
    }
}
customElements.define("orders-panel", OrdersPanel);

class TractorsPanel extends HTMLElement {
    constructor() {
        super();
        this.shadowDOM = this.attachShadow({mode: "open"});
    }

    connectedCallback() {
        this.shadowDOM.innerHTML = `
        <style>
        ${panelLook}
        :host { height: 120px; grid-template-columns: 234px 273px 1004px 1fr; }
        h2 { padding-top: 10px; line-height: 42px; }
        .find { width: 195px; margin-left: 3px; }
        .form { grid-template-columns: 97px 138px; column-gap: 7px; padding-top: 9px; }
        .actions { display: grid; align-content: start; gap: 4px; padding-top: 3px; }
        .line { display: flex; gap: 13px; }
        .post, .plan, .mc { width: 235px; }
        .search { width: 152px; }
        .comments { width: 186px; margin-left: 156px; }
        .pta { width: 126px; }
        .events { width: 144px; }
        .me { width: 176px; }
        </style>
        <div><h2>Tractors: 30</h2><panel-button class="find" icon="sheet">FindOrder</panel-button></div>
        <div class="form">
            <panel-button plain>Tractor</panel-button><text-field label="Tractor"></text-field>
            <panel-button plain>Driver</panel-button><text-field label="Driver"></text-field>
        </div>
        <div class="actions">
            <div class="line">
                <panel-button class="post" icon="post">Post/Unpost</panel-button>
                <panel-button class="search" icon="mapSearch">Search</panel-button>
                <panel-button class="comments" icon="comments">Comments</panel-button>
            </div>
            <div class="line">
                <panel-button class="pta" icon="dial">PTA</panel-button>
                <panel-button class="events" icon="events">Events</panel-button>
                <panel-button class="me" icon="note">M and E's</panel-button>
                <panel-button class="plan" icon="clock">Preplan Feasible</panel-button>
                <panel-button class="mc" icon="mail">MC Message</panel-button>
            </div>
        </div>
        <plan-info start></plan-info>`;
    }
}
customElements.define("tractors-panel", TractorsPanel);

/* MAIN TOOLBAR */
const TOOLS = [
    ["preassign", "Preassign", 92], ["unassign", "Unassign", 89], ["dispatch", "Dispatch", 85], ["balance", "Balance", 80],
    ["filter", "Filter", 79], ["pool", "Pool", 79], ["globe", "Find Near", 92], ["map", "Map", 79],
    ["zmit", "Zmit", 79], ["empty", "Empty", 79], ["view", "View", 79], ["callin", "Callin", 79],
    ["change", "Change", 79], ["timeline", "Timeline", 79], ["link", "Link", 79], ["request", "Request", 80],
    ["mileage", "Mileage", 80], ["clock", "Feasibility", 96], ["send", "Send Message", 134],
    ["envelope", "View Messages", 139], ["globe", "Asset Near", 105]
];

class MainToolbar extends HTMLElement {
    constructor() {
        super();
        this.shadowDOM = this.attachShadow({mode: "open"});
    }

    connectedCallback() {
        this.shadowDOM.innerHTML = `
        <style>
        :host { display: flex; align-items: flex-start; gap: 5px; padding: 5px 0 7px 18px; background: #efefef; border-top: 3px solid #62656c; border-bottom: 4px solid #b9b9b9; }
        .exit { width: 76px; margin-left: auto; }
        </style>
        ${TOOLS.map(([icon, label, width]) => `<tool-button icon="${icon}" ${icon === "clock" ? "small" : ""} style="width: ${width}px">${label}</tool-button>`).join("")}
        <tool-button class="exit" icon="exit">Exit</tool-button>`;
    }
}
customElements.define("main-toolbar", MainToolbar);

/* WINDOW */
class PlanningWindow extends HTMLElement {
    constructor() {
        super();
        this.shadowDOM = this.attachShadow({mode: "open"});
    }

    connectedCallback() {
        this.shadowDOM.innerHTML = `
        <style>
        :host {
            box-sizing: border-box;
            display: flex;
            flex-direction: column;
            height: calc(100vh - 3px);
            margin: 0 3px 3px;
            border: solid #22262a;
            border-width: 0 2px 2px;
            border-radius: 28px;
            overflow: hidden;
            background: #eeeeee;
        }
        header { flex: none; display: flex; align-items: center; gap: 20px; height: 93px; padding-left: 37px; background: #292929; }
        header i { width: 30px; height: 30px; border-radius: 50%; background: #565656; }
        nav { flex: none; height: 40px; }
        main { flex: 1; min-height: 0; display: flex; flex-direction: column; }
        .divider { flex: none; box-sizing: border-box; display: flex; gap: 3px; height: 22px; padding-left: 5px; border-top: 2px solid #b2b2b2; border-bottom: 3px solid #ababab; background: #f2f2f2; }
        .divider button { width: 20px; height: 15px; padding: 0; border: 0; background: #111; clip-path: polygon(50% 0, 100% 100%, 0 100%); }
        .divider button + button { clip-path: polygon(0 0, 100% 0, 50% 100%); }
        .lower { flex: 1; --bar: 30px; }
        .lower data-grid { margin-bottom: 4px; }
        .edge { border-top: 2px solid #a5a5a5; background: #fafafa; }
        footer { display: flex; justify-content: flex-end; height: 24px; margin-top: 8px; border-top: 3px solid #7d7d7d; background: #eeeeee; }
        .state { width: 152px; padding-left: 12px; border-left: 2px solid #8a8a8a; }
        .state svg { width: 28px; height: 25px; }
        </style>
        <header><i></i><i></i><i></i></header>
        <nav></nav>
        <main-toolbar></main-toolbar>
        <main>
            <orders-panel></orders-panel>
            <scroll-frame tracks="262 279 941 2148"><data-grid source="orders"></data-grid></scroll-frame>
            <div class="divider"><button type="button" aria-label="Collapse up"></button><button type="button" aria-label="Collapse down"></button></div>
            <tractors-panel></tractors-panel>
            <scroll-frame class="lower" tracks="211 209 586 2503"><data-grid source="tractors"></data-grid></scroll-frame>
        </main>
        <div class="edge"><footer><div class="state">${svg("user")}</div></footer></div>`;
    }
}
customElements.define("planning-window", PlanningWindow);
</script>
</body>
</html>
